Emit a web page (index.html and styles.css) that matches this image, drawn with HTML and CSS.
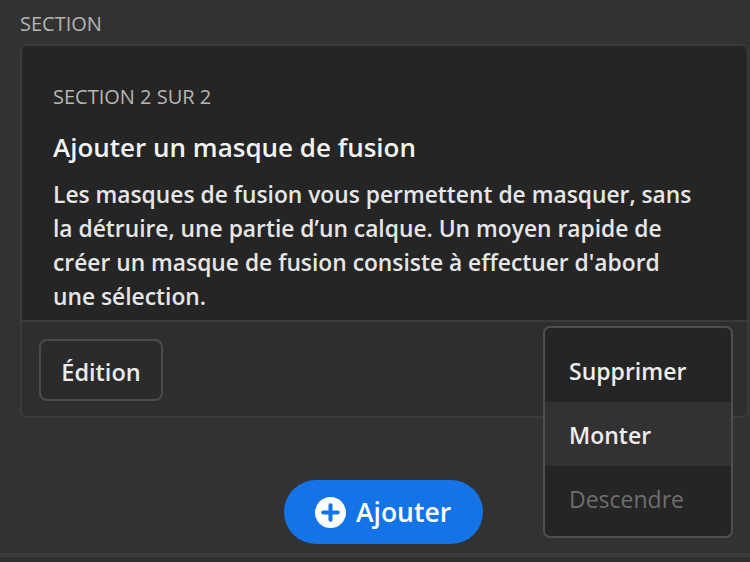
FILE: index.html
```html
<!DOCTYPE html>
<html lang="fr">
<head>
<meta charset="utf-8">
<title>Section</title>
<link rel="stylesheet" href="styles.css">
</head>
<body>
<div class="page">
  <div class="label">SECTION</div>
  <div class="card">
    <div class="card-body">
      <div class="eyebrow">SECTION 2 SUR 2</div>
      <h2 class="title">Ajouter un masque de fusion</h2>
      <p class="desc">Les masques de fusion vous permettent de masquer, sans la détruire, une partie d’un calque. Un moyen rapide de créer un masque de fusion consiste à effectuer d'abord une sélection.</p>
    </div>
    <div class="card-footer">
      <button class="btn-edit">Édition</button>
    </div>
  </div>
  <div class="add-row">
    <button class="btn-add">
      <svg class="plus" width="31" height="31" viewBox="0 0 32 32"><circle cx="16" cy="16" r="16" fill="#fff"/><path d="M16 8.5v15M8.5 16h15" stroke="#1473e6" stroke-width="4.2" stroke-linecap="round"/></svg>
      <span>Ajouter</span>
    </button>
  </div>
  <div class="menu">
    <div class="menu-item">Supprimer</div>
    <div class="menu-item is-hover">Monter</div>
    <div class="menu-item is-disabled">Descendre</div>
  </div>
</div>
<div class="bottom-bar"></div>
</body>
</html>
```
FILE: styles.css
```css
html, body {
  margin: 0;
  padding: 0;
}
body {
  background: #323232;
  font-family: "Open Sans", "Noto Sans", sans-serif;
  color: #ebebeb;
  width: 750px;
  height: 562px;
  overflow: hidden;
  position: relative;
}
.page {
  position: relative;
  height: 553px;
  padding-left: 20px;
  box-sizing: border-box;
}
.label {
  font-size: 20px;
  color: #b4b4b4;
  line-height: 24px;
  padding-top: 12px;
  height: 32px;
}
.card {
  width: 729px;
  box-sizing: border-box;
  border: 2px solid #3b3b3b;
  border-radius: 7px;
  overflow: hidden;
  background: #2e2e2e;
}
.card-body {
  background: #252525;
  padding: 39px 20px 10px 31px;
  height: 276px;
  box-sizing: border-box;
  border-bottom: 2px solid #3a3a3a;
}
.eyebrow {
  font-size: 20px;
  color: #b6b6b6;
  line-height: 24px;
}
.title {
  margin: 22px 0 0;
  font-size: 26px;
  font-weight: 600;
  line-height: 32px;
  color: #f2f2f2;
}
.desc {
  margin: 15px 0 0;
  font-size: 22.8px;
  font-weight: 600;
  line-height: 34px;
  color: #e6e6e6;
  max-width: 644px;
}
.card-footer {
  height: 94px;
  padding: 17px 0 0 17px;
  box-sizing: border-box;
  background: #2e2e2e;
}
.btn-edit {
  width: 124px;
  height: 62px;
  border: 2px solid #4b4b4b;
  border-radius: 8px;
  background: #2b2b2b;
  color: #ebebeb;
  font-family: inherit;
  font-size: 23.5px;
  font-weight: 600;
  padding: 4px 0 0;
}
.add-row {
  width: 729px;
  display: flex;
  justify-content: center;
  margin-top: 62px;
}
.btn-add {
  display: flex;
  align-items: center;
  gap: 10px;
  height: 64px;
  width: 199px;
  padding: 0 0 0 31px;
  box-sizing: border-box;
  border: none;
  border-radius: 32px;
  background: #1473e6;
  color: #ffffff;
  font-family: inherit;
  font-size: 26.5px;
  font-weight: 600;
  margin-left: -2px;
}
.plus {
  flex: none;
}
.menu {
  position: absolute;
  left: 543px;
  top: 326px;
  width: 190px;
  height: 212px;
  box-sizing: border-box;
  border: 2px solid #4f4f4f;
  border-radius: 7px;
  background: #252525;
  padding-top: 10px;
  overflow: hidden;
}
.menu-item {
  height: 64px;
  line-height: 66px;
  padding-left: 24px;
  font-size: 23px;
  font-weight: 600;
  color: #ededed;
}
.menu-item.is-hover {
  background: #323232;
}
.menu-item.is-disabled {
  color: #6e6e6e;
  font-weight: 400;
}
.bottom-bar {
  height: 4px;
  background: #3c3c3c;
  border-bottom: 5px solid #2f2f2f;
}
```
